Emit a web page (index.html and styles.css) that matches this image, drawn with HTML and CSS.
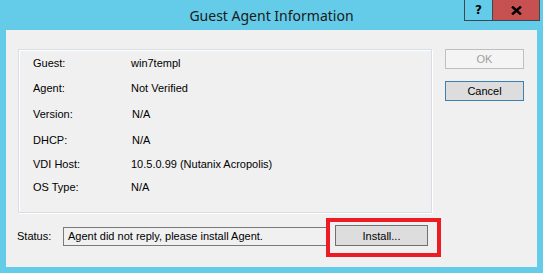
FILE: index.html
```html
<!DOCTYPE html>
<html>

<head>
    <title>Guest Agent Information</title>
    <meta charset="utf-8">
    <link rel="stylesheet" href="styles.css">
</head>

<body>

    <div class="vindue">
        <header class="titel">
            <span class="titeltekst">Guest Agent Information</span>
            <div class="knapper">
                <div class="hjaelp">?</div>
                <div class="luk">
                    <svg width="11" height="9" viewBox="0 0 11 9">
                        <path d="M1 0.5 L10 8.5 M10 0.5 L1 8.5" stroke="#000" stroke-width="2.4" />
                    </svg>
                </div>
            </div>
        </header>

        <div class="klient">
            <div class="venstre">
                <div class="gruppe">
                    <div class="felt">Guest:</div>
                    <div class="vaerdi">win7templ</div>
                    <div class="felt">Agent:</div>
                    <div class="vaerdi">Not Verified</div>
                    <div class="felt">Version:</div>
                    <div class="vaerdi skub">N/A</div>
                    <div class="felt">DHCP:</div>
                    <div class="vaerdi skub">N/A</div>
                    <div class="felt">VDI Host:</div>
                    <div class="vaerdi">10.5.0.99 (Nutanix Acropolis)</div>
                    <div class="felt">OS Type:</div>
                    <div class="vaerdi">N/A</div>
                </div>

                <div class="status">
                    <span class="statuslabel">Status:</span>
                    <div class="statusboks">Agent did not reply, please install Agent.</div>
                    <div class="installer">
                        <button class="knap">Install...</button>
                        <div class="markering"></div>
                    </div>
                </div>
            </div>

            <div class="hoejre">
                <button class="knap ok">OK</button>
                <button class="knap cancel">Cancel</button>
            </div>
        </div>
    </div>

</body>

</html>
```

FILE: styles.css
```css
body {
    margin: 0;
    background-color: #64cbe8;
    font-family: "Liberation Sans", Arial, sans-serif;
    font-size: 11px;
    color: #000;
}

.vindue {
    width: 543px;
    height: 273px;
}

.titel {
    position: relative;
    height: 30px;
    display: flex;
    justify-content: center;
    align-items: center;
}

.titeltekst {
    font-family: "Noto Sans", sans-serif;
    font-size: 14px;
    color: #1a1a1a;
    margin-left: 0px;
    margin-top: 0px;
}

.knapper {
    position: absolute;
    top: 0;
    left: 464px;
    display: flex;
    height: 20px;
    border: 1px solid #3a4a55;
    border-top: none;
}

.hjaelp {
    width: 27px;
    display: flex;
    justify-content: center;
    align-items: center;
    font-family: "DejaVu Sans", sans-serif;
    font-weight: bold;
    font-size: 12px;
    border-right: 1px solid #3a4a55;
}

.luk {
    width: 46px;
    background-color: #c75050;
    display: flex;
    justify-content: center;
    align-items: center;
}

.klient {
    margin-left: 6px;
    width: 531px;
    height: 237px;
    background-color: #f0f0f0;
    display: flex;
    box-sizing: border-box;
    padding: 19px 0 0 12px;
}

.venstre {
    width: 414px;
}

.gruppe {
    height: 164px;
    box-sizing: border-box;
    border: 1px solid #d5dfe5;
    box-shadow: inset 1px 1px 0 #fff, 1px 1px 0 #fff;
    display: grid;
    grid-template-columns: 98px 1fr;
    grid-template-rows: 24px 26px 25px 27px 22px 24px;
    align-items: center;
    padding: 1px 0 0 14px;
}

.skub {
    padding-left: 1px;
}

.status {
    display: flex;
    align-items: center;
    margin-top: 12px;
}

.statuslabel {
    width: 46px;
    margin-left: -1px;
}

.statusboks {
    width: 266px;
    height: 19px;
    box-sizing: border-box;
    border: 1px solid #7a7a7a;
    border-right: none;
    padding-left: 4px;
    line-height: 17px;
    margin-top: 2px;
}

.installer {
    position: relative;
    margin-left: 6px;
}

.knap {
    font-family: "Liberation Sans", Arial, sans-serif;
    font-size: 11px;
    color: #000;
    background-color: #e1e1e1;
    border: 1px solid #adadad;
    padding: 0;
    display: block;
}

.installer .knap {
    width: 93px;
    height: 21px;
    border-color: #707070;
    background-color: #dddddd;
}

.markering {
    position: absolute;
    left: -9px;
    top: -7px;
    width: 115px;
    height: 39px;
    box-sizing: border-box;
    border: 4px solid #ed1c24;
}

.hoejre {
    margin-left: 13px;
}

.hoejre .knap {
    width: 79px;
    height: 20px;
}

.ok {
    background-color: #f4f4f4;
    border-color: #bfbfbf;
    color: #a0a0a0;
}

.cancel {
    margin-top: 12px;
    height: 21px;
    border-color: #3c7fb1;
    background-color: #dddddd;
}
```
